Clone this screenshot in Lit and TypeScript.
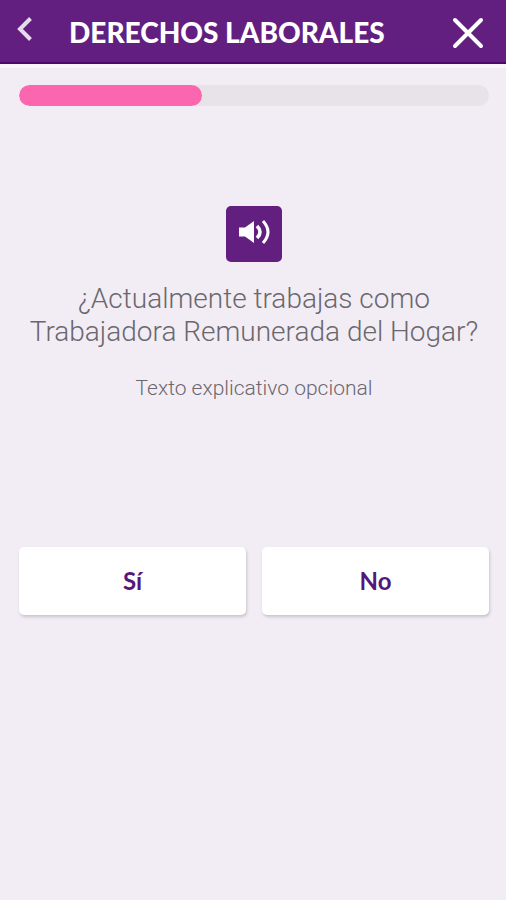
import { LitElement, html, css } from "lit";
import { customElement, property, state } from "lit/decorators.js";

@customElement("progress-bar")
class ProgressBar extends LitElement {
  @property({ type: Number }) value = 0;

  static styles = css`
    :host {
      display: block;
    }
    .track {
      height: 21px;
      border-radius: 11px;
      background: #e7e3e9;
      overflow: hidden;
    }
    .fill {
      height: 100%;
      border-radius: 11px;
      background: #fb67ae;
    }
  `;

  render() {
    return html`
      <div
        class="track"
        role="progressbar"
        aria-label="Progreso"
        aria-valuemin="0"
        aria-valuemax="100"
        aria-valuenow=${this.value}
      >
        <div class="fill" style="width: ${this.value}%"></div>
      </div>
    `;
  }
}

@customElement("app-root")
class AppRoot extends LitElement {
  @state() private answer = "";

  static styles = css`
    :host {
      display: block;
      min-height: 100vh;
      background: #f2edf4;
      font-family: Roboto, "Liberation Sans", sans-serif;
    }
    button {
      margin: 0;
      padding: 0;
      border: 0;
      font: inherit;
      cursor: pointer;
    }
    svg {
      display: block;
    }
    .bar {
      display: flex;
      align-items: center;
      gap: 35px;
      box-sizing: border-box;
      height: 64px;
      padding: 0 20px 0 16px;
      background: #621f80;
      border-bottom: 2px solid #4b0a6b;
      box-shadow: 0 4px 0 #f9f5fb;
      color: #fff;
    }
    .icon {
      background: none;
      color: #fff;
    }
    .back {
      color: #e6dce9;
      padding-bottom: 4px;
    }
    .close {
      padding-top: 4px;
    }
    .title {
      flex: 1;
      margin: 0;
      padding-top: 2px;
      white-space: nowrap;
      font: 900 28px/32px Lato, sans-serif;
    }
    main {
      padding: 21px 17px 24px 19px;
    }
    .question {
      display: flex;
      flex-direction: column;
      align-items: center;
      padding: 100px 0 146px;
      text-align: center;
    }
    .listen {
      display: grid;
      place-items: center;
      width: 56px;
      height: 56px;
      padding-bottom: 4px;
      border-radius: 5px;
      background: #621f80;
      color: #fff;
    }
    .prompt {
      margin: 20px 0 0;
      color: #6b676e;
      font-size: 28px;
      font-weight: 300;
      line-height: 33px;
    }
    .hint {
      margin: 28px 0 0;
      color: #6b676e;
      font-size: 21px;
      font-weight: 300;
      line-height: 25px;
    }
    .answers {
      display: grid;
      grid-template-columns: 1fr 1fr;
      gap: 16px;
    }
    .answer {
      height: 68px;
      border-radius: 5px;
      background: #fff;
      box-shadow: 1px 2px 3px #c9c4cc;
      color: #56177a;
      font: 700 24px/32px Lato, sans-serif;
    }
  `;

  private choose(value: string) {
    this.answer = value;
  }

  render() {
    return html`
      <header class="bar">
        <button class="icon back" aria-label="Volver">
          <svg width="18" height="26" viewBox="0 0 18 26" fill="none" stroke="currentColor" stroke-width="4">
            <path d="M14.5 2.5 L4 13 L14.5 23.5" />
          </svg>
        </button>
        <h1 class="title">DERECHOS LABORALES</h1>
        <button class="icon close" aria-label="Cerrar">
          <svg width="36" height="36" viewBox="0 0 36 36" fill="none" stroke="currentColor" stroke-width="4" stroke-linecap="round">
            <path d="M5 5 L31 31 M31 5 L5 31" />
          </svg>
        </button>
      </header>
      <main>
        <progress-bar .value=${39}></progress-bar>
        <section class="question">
          <button class="listen" aria-label="Escuchar">
            <svg width="34" height="26" viewBox="0 0 34 26" fill="none" stroke="currentColor">
              <path d="M2 8.5 H8 L17 2 V24 L8 17.5 H2 Z" fill="currentColor" stroke="none" />
              <path d="M20 7 Q26 13 20 19" stroke-width="3.5" />
              <path d="M26 2 Q36 13 26 24" stroke-width="3" />
            </svg>
          </button>
          <h2 class="prompt">¿Actualmente trabajas como<br />Trabajadora Remunerada del Hogar?</h2>
          <p class="hint">Texto explicativo opcional</p>
        </section>
        <div class="answers">
          ${["Sí", "No"].map(
            (label) => html`
              <button
                class="answer"
                aria-pressed=${this.answer === label ? "true" : "false"}
                @click=${() => this.choose(label)}
              >
                ${label}
              </button>
            `
          )}
        </div>
      </main>
    `;
  }
}
